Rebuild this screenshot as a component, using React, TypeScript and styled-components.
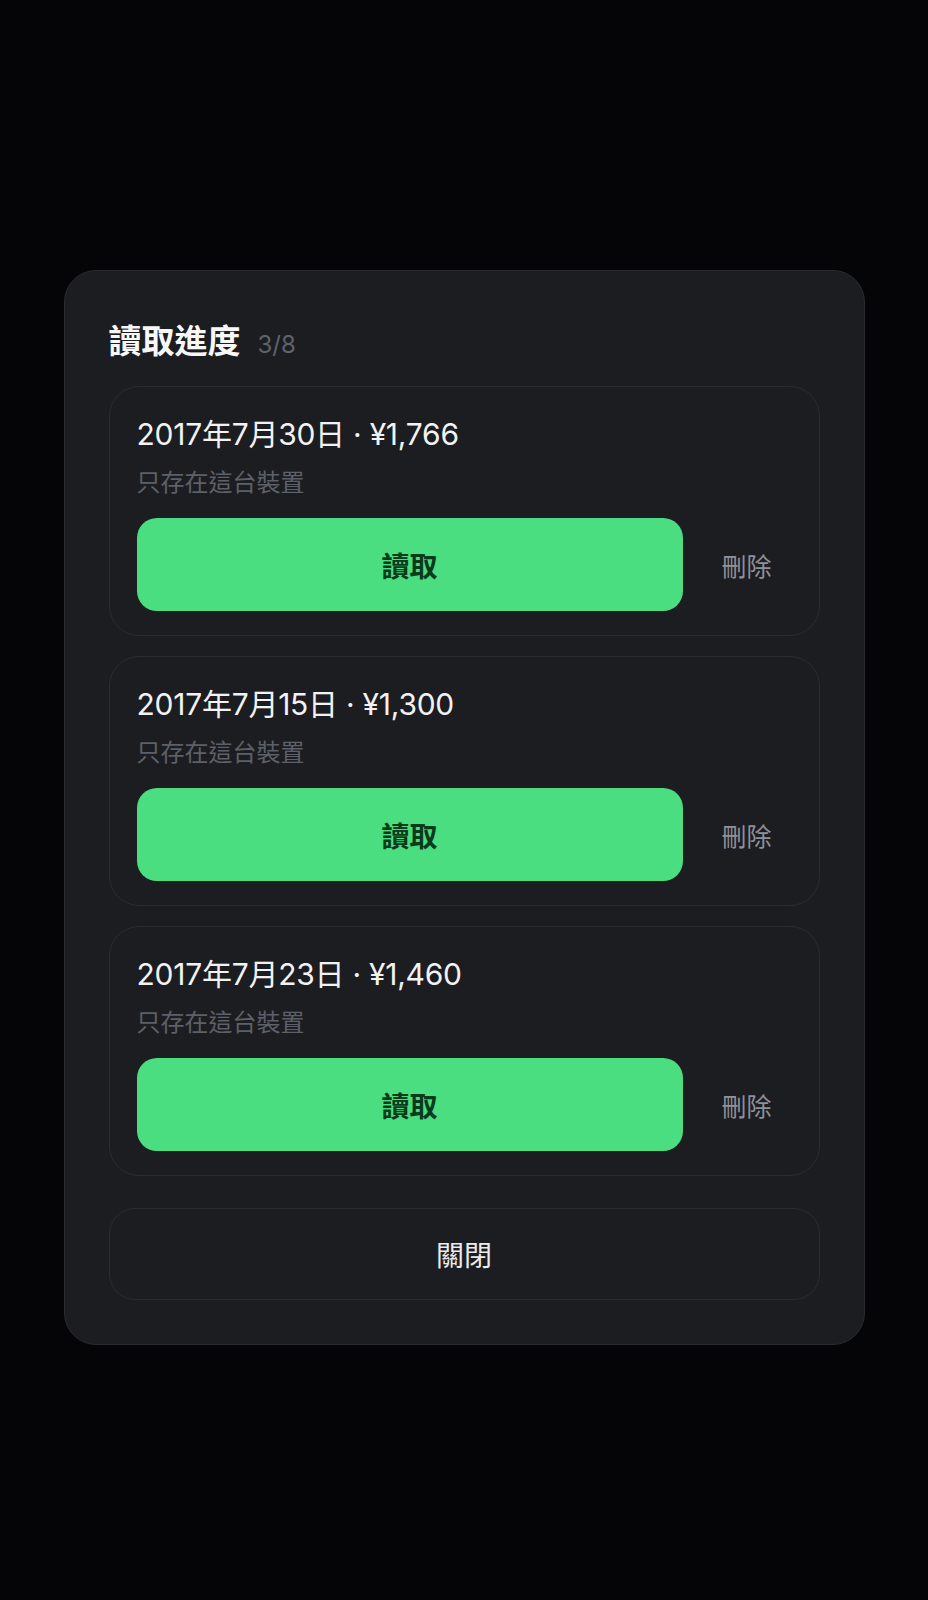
import React from 'react';
import styled, { createGlobalStyle } from 'styled-components';

const GlobalStyle = createGlobalStyle`
  html, body {
    margin: 0;
    padding: 0;
    background: #050507;
  }

  body {
    font-family: 'Inter', 'Noto Sans CJK TC', 'Noto Sans', sans-serif;
    -webkit-font-smoothing: antialiased;
  }
`;

const Screen = styled.div`
  min-height: 1600px;
  display: flex;
  justify-content: center;
  align-items: flex-start;
  padding-top: 270px;
  box-sizing: border-box;
`;

const Panel = styled.div`
  width: 801px;
  box-sizing: border-box;
  background: #1c1d21;
  border: 1px solid #2a2b30;
  border-radius: 32px;
  padding: 48px 44px 44px;
  display: flex;
  flex-direction: column;
`;

const Header = styled.div`
  display: flex;
  align-items: baseline;
  gap: 17px;
  margin-bottom: 23px;
`;

const Title = styled.h2`
  margin: 0;
  font-size: 33px;
  line-height: 44px;
  font-weight: 700;
  color: #f7f7f8;
`;

const Count = styled.span`
  font-size: 24px;
  color: #5e626b;
`;

const List = styled.div`
  display: flex;
  flex-direction: column;
  gap: 20px;
`;

const Card = styled.div`
  border: 1px solid #2b2c31;
  border-radius: 30px;
  padding: 27px 26px 24px 27px;
  display: flex;
  flex-direction: column;
`;

const SaveTitle = styled.div`
  font-size: 30px;
  line-height: 40px;
  letter-spacing: -0.25px;
  color: #f2f2f4;
  font-weight: 400;
`;

const SaveNote = styled.div`
  margin-top: 12px;
  font-size: 24px;
  line-height: 34px;
  color: #5d6069;
`;

const Actions = styled.div`
  margin-top: 18px;
  display: flex;
  align-items: center;
  gap: 18px;
`;

const LoadButton = styled.button`
  flex: 1;
  height: 93px;
  border: none;
  border-radius: 20px;
  background: #4ade80;
  color: #0a3a1c;
  font-family: inherit;
  font-size: 28px;
  font-weight: 700;
  cursor: pointer;
`;

const DeleteButton = styled.button`
  width: 92px;
  border: none;
  background: transparent;
  color: #8e919a;
  font-family: inherit;
  font-size: 25px;
  padding: 0;
  cursor: pointer;
`;

const CloseButton = styled.button`
  margin-top: 32px;
  height: 92px;
  border: 1px solid #2b2c31;
  border-radius: 26px;
  background: transparent;
  color: #ececee;
  font-family: inherit;
  font-size: 28px;
  cursor: pointer;
`;

interface Save {
  date: string;
  amount: string;
}

const saves: Save[] = [
  { date: '2017年7月30日', amount: '¥1,766' },
  { date: '2017年7月15日', amount: '¥1,300' },
  { date: '2017年7月23日', amount: '¥1,460' },
];

const SaveCard: React.FC<Save> = ({ date, amount }) => (
  <Card>
    <SaveTitle>
      {date} · {amount}
    </SaveTitle>
    <SaveNote>只存在這台裝置</SaveNote>
    <Actions>
      <LoadButton>讀取</LoadButton>
      <DeleteButton>刪除</DeleteButton>
    </Actions>
  </Card>
);

const App: React.FC = () => {
  return (
    <>
      <GlobalStyle />
      <Screen>
        <Panel>
          <Header>
            <Title>讀取進度</Title>
            <Count>3/8</Count>
          </Header>
          <List>
            {saves.map((s) => (
              <SaveCard key={s.date} {...s} />
            ))}
          </List>
          <CloseButton>關閉</CloseButton>
        </Panel>
      </Screen>
    </>
  );
};

export default App;
